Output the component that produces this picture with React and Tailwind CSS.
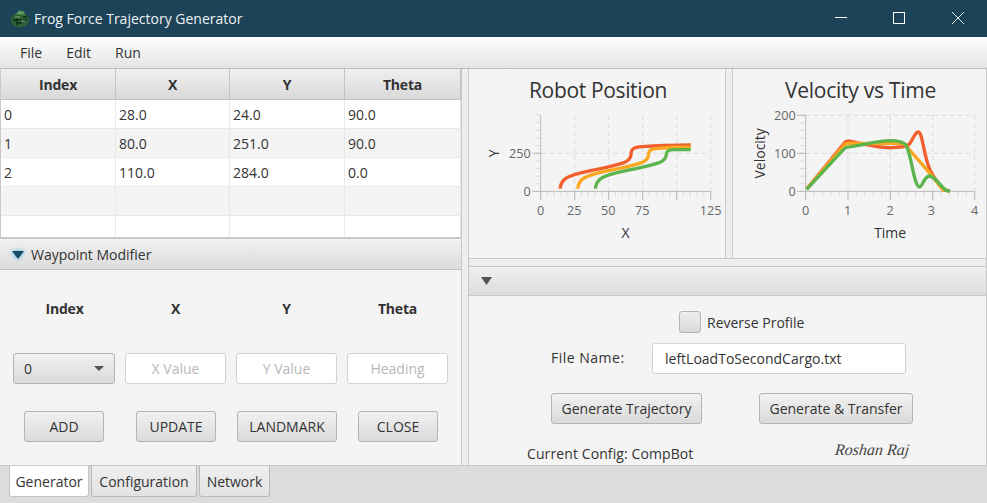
import React from "react";

const btn = "h-[31px] rounded-[3px] border border-[#b4b4b4] bg-gradient-to-b from-[#f1f1f1] to-[#dadada] text-[14px] text-[#333] flex items-center justify-center";
const field = "h-[31px] rounded-[3px] border border-[#d2d2d2] bg-white text-[14px] flex items-center";

const rows = [
  ["0", "28.0", "24.0", "90.0"],
  ["1", "80.0", "251.0", "90.0"],
  ["2", "110.0", "284.0", "0.0"],
  ["", "", "", ""],
  ["", "", "", ""],
];

function Axes({ x0, x1, y0, y1, xMajors, yMajors, xMinor, yMinor, xLabels, yLabels, xTitle, yTitle, yTitleX }) {
  const xm = [];
  for (let v = x0; v <= x1 + 0.1; v += xMinor) xm.push(v);
  const ym = [];
  for (let v = y0; v >= y1 - 0.1; v -= yMinor) ym.push(v);
  return (
    <g>
      {xMajors.slice(1).map((x) => (
        <line key={x} x1={x} x2={x} y1={y1} y2={y0} stroke="#dcdcdc" strokeWidth="3" strokeDasharray="15 9" />
      ))}
      {yMajors.slice(1).map((y) => (
        <line key={y} x1={x0} x2={x1} y1={y} y2={y} stroke="#dcdcdc" strokeWidth="3" strokeDasharray="15 9" />
      ))}
      {xm.map((x) => (
        <line key={x} x1={x} x2={x} y1={y0} y2={y0 + 17} stroke="#dcdcdc" strokeWidth="3" />
      ))}
      {ym.map((y) => (
        <line key={y} x1={x0 - 17} x2={x0} y1={y} y2={y} stroke="#dcdcdc" strokeWidth="3" />
      ))}
      {xMajors.map((x) => (
        <line key={x} x1={x} x2={x} y1={y0} y2={y0 + 26} stroke="#b9b9b9" strokeWidth="3" />
      ))}
      {yMajors.map((y) => (
        <line key={y} x1={x0 - 26} x2={x0} y1={y} y2={y} stroke="#b9b9b9" strokeWidth="3" />
      ))}
      <line x1={x0} x2={x1} y1={y0} y2={y0} stroke="#b9b9b9" strokeWidth="3" />
      <line x1={x0} x2={x0} y1={y1} y2={y0} stroke="#b9b9b9" strokeWidth="3" />
      <g fill="#666" fontSize="38" textAnchor="middle">
        {xLabels.map(([x, t]) => (
          <text key={t} x={x} y={449}>{t}</text>
        ))}
      </g>
      <g fill="#666" fontSize="38" textAnchor="end">
        {yLabels.map(([y, t]) => (
          <text key={t} x={x0 - 30} y={y + 13}>{t}</text>
        ))}
      </g>
      <text x={(x0 + x1) / 2} y={519} fill="#333" fontSize="42" textAnchor="middle">{xTitle}</text>
      <text transform={`translate(${yTitleX} 265) rotate(-90)`} fill="#333" fontSize="42" textAnchor="middle">{yTitle}</text>
    </g>
  );
}

function Curve({ d, c }) {
  return <path d={d} fill="none" stroke={c} strokeWidth="10" strokeLinejoin="round" />;
}

function FrogIcon() {
  return (
    <svg width="20" height="20" viewBox="0 0 20 20" className="shrink-0">
      <ellipse cx="10" cy="11" rx="9" ry="7.5" fill="#2f5f34" />
      <path d="M6 5 L9 1.5 L14 2.5 L15 6 Z" fill="#5d9a63" />
      <path d="M3 11 H17 M7 8 V16 M13 8 H17 M6 14 H12" stroke="#0f2c1a" strokeWidth="1.3" fill="none" />
      <path d="M5 8 H10 M11 12 H15" stroke="#7db383" strokeWidth="1" fill="none" />
    </svg>
  );
}

export default function App() {
  return (
    <div className="w-[987px] h-[503px] overflow-hidden flex flex-col bg-[#f4f4f4] text-[#333] font-['Open_Sans',sans-serif] text-[14px]">
      {/* title bar */}
      <div className="h-[37px] shrink-0 bg-[#1d4359] flex items-center pl-[10px] text-[#eef2f4]">
        <FrogIcon />
        <span className="ml-[4px] flex-1">Frog Force Trajectory Generator</span>
        <svg width="12" height="12" viewBox="0 0 12 12" className="mr-[46px] -mt-[1px]"><path d="M0 5.5H12" stroke="#fff" /></svg>
        <svg width="12" height="12" viewBox="0 0 12 12" className="mr-[47px] -mt-[1px]"><rect x="0.5" y="0.5" width="11" height="11" fill="none" stroke="#fff" /></svg>
        <svg width="12" height="12" viewBox="0 0 12 12" className="mr-[23px] -mt-[1px]"><path d="M0 0L12 12M12 0L0 12" stroke="#e8edf0" /></svg>
      </div>
      {/* menu */}
      <div className="h-[32px] shrink-0 bg-gradient-to-b from-[#fefefe] to-[#e4e4e4] border-b border-[#bdbdbd] flex items-center pl-[20px] gap-[24px] text-[#333]">
        <span>File</span>
        <span>Edit</span>
        <span>Run</span>
      </div>
      {/* workspace */}
      <div className="h-[396px] shrink-0 flex overflow-hidden">
        {/* left */}
        <div className="w-[461px] shrink-0 flex flex-col">
          <div className="h-[170px] shrink-0 border-b-2 border-l border-[#c8c8c8] overflow-hidden bg-white">
            <div className="grid grid-cols-[115px_114px_115px_116px] h-[31px] font-bold tracking-[-0.2px]">
              {["Index", "X", "Y", "Theta"].map((h) => (
                <div key={h} className="bg-gradient-to-b from-[#f0f0f0] to-[#d9d9d9] border-r border-b border-[#c4c4c4] flex items-center justify-center">{h}</div>
              ))}
            </div>
            {rows.map((r, i) => (
              <div key={i} className={`grid grid-cols-[115px_114px_115px_116px] h-[29px] ${i % 2 ? "bg-[#f4f4f4]" : "bg-white"}`}>
                {r.map((c, j) => (
                  <div key={j} className="border-r border-b border-[#e8e8e8] flex items-center pl-[3px]">{c}</div>
                ))}
              </div>
            ))}
          </div>
          <div className="h-[30px] shrink-0 mt-[1px] bg-gradient-to-b from-[#f0f0f0] to-[#dcdcdc] border-b border-[#c0c0c0] flex items-center pl-[11px] gap-[6px]">
            <svg width="14" height="10" viewBox="0 0 14 10" style={{ filter: "drop-shadow(0 0 2px #45b5f0)" }}><path d="M1 1H13L7 9Z" fill="#174a66" /></svg>
            <span>Waypoint Modifier</span>
          </div>
          <div className="flex-1 flex flex-col">
            <div className="flex pl-[14px] gap-[10px] pt-[28px] font-bold tracking-[-0.2px]">
              {["Index", "X", "Y", "Theta"].map((h) => (
                <div key={h} className="w-[101px] text-center">{h}</div>
              ))}
            </div>
            <div className="flex pl-[13px] gap-[10px] mt-[34px]">
              <div className={`${btn} w-[102px] justify-between! px-[10px]`}>
                <span>0</span>
                <svg width="10" height="5" viewBox="0 0 10 5"><path d="M0 0H10L5 5Z" fill="#555" /></svg>
              </div>
              {["X Value", "Y Value", "Heading"].map((p) => (
                <div key={p} className={`${field} w-[101px] justify-center text-[#b8b8b8]`}>{p}</div>
              ))}
            </div>
            <div className="flex pl-[24px] mt-[27px]">
              <div className={`${btn} w-[80px]`}>ADD</div>
              <div className={`${btn} w-[80px] ml-[32px]`}>UPDATE</div>
              <div className={`${btn} w-[100px] ml-[21px]`}>LANDMARK</div>
              <div className={`${btn} w-[80px] ml-[21px]`}>CLOSE</div>
            </div>
          </div>
        </div>
        {/* divider */}
        <div className="w-[8px] shrink-0 bg-[#eeeeee] border-l border-r border-[#c8c8c8]" />
        {/* right */}
        <div className="flex-1 flex flex-col min-w-0 border-r border-[#c8c8c8]">
          <div className="h-[190px] shrink-0 flex border-b border-[#c8c8c8]">
            <div className="w-[256px] shrink-0 flex flex-col">
              <div className="h-[36px] shrink-0 flex items-center justify-center text-[21px] leading-[28px] tracking-[-0.35px] pt-[5px] pl-[2px]">Robot Position</div>
              <svg className="block" width="255" height="153" viewBox="0 120 765 459">
                <Axes x0={215} x1={725} y0={379} y1={150} xMajors={[215, 317, 419, 521, 623, 725]} yMajors={[379, 265]} xMinor={20.4} yMinor={22.9}
                  xLabels={[[215, "0"], [316, "25"], [418, "50"], [520, "75"], [725, "125"]]} yLabels={[[379, "0"], [265, "250"]]} xTitle="X" yTitle="Y" yTitleX={91} />
                <Curve c="#f15f2c" d="M273 371 C276 345 292 334 330 325 C380 312 430 306 465 293 C482 286 486 278 486 268 C486 252 492 247 520 245 C570 241 620 240 665 240" />
                <Curve c="#faa61f" d="M326 371 C329 345 345 334 383 325 C433 312 483 306 518 293 C535 286 539 278 539 268 C539 255 545 252 570 250 C600 247 640 246 665 246" />
                <Curve c="#5cb44c" d="M379 371 C382 345 398 334 436 325 C486 312 536 306 571 293 C588 286 592 278 592 268 C592 258 598 255 615 254 L665 254" />
              </svg>
            </div>
            <div className="w-[8px] shrink-0 border-x border-[#c8c8c8] bg-[#eeeeee]" />
            <div className="flex-1 flex flex-col min-w-0">
              <div className="h-[36px] shrink-0 flex items-center justify-center text-[21px] leading-[28px] tracking-[-0.25px] pt-[5px] pl-[2px]">Velocity vs Time</div>
              <svg className="block" width="254" height="153" viewBox="9 120 762 459">
                <Axes x0={227} x1={734} y0={379} y1={151} xMajors={[227, 354, 481, 608, 734]} yMajors={[379, 265, 151]} xMinor={25.35} yMinor={22.8}
                  xLabels={[[227, "0"], [353, "1"], [480, "2"], [604, "3"], [734, "4"]]} yLabels={[[379, "0"], [265, "100"], [151, "200"]]} xTitle="Time" yTitle="Velocity" yTitleX={105} />
                <Curve c="#f15f2c" d="M230 372 L345 232 Q352 226 362 229 C400 238 450 250 485 248 C510 247 525 246 535 240 C548 230 552 202 565 201 C578 202 580 270 600 315 C615 345 635 368 645 375 L660 378" />
                <Curve c="#faa61f" d="M230 372 L345 238 Q350 234 360 235 C400 236 450 235 490 235 C510 235 522 233 530 245 L600 325 L642 379" />
                <Curve c="#5cb44c" d="M230 373 L343 251 Q350 246 362 245 C400 240 440 228 480 227 C505 227 520 230 527 240 C545 265 550 360 568 366 C578 366 582 334 598 333 C615 334 630 362 648 376 L660 378" />
              </svg>
            </div>
          </div>
          <div className="h-[7px] shrink-0 bg-[#eeeeee]" />
          <div className="h-[30px] shrink-0 bg-gradient-to-b from-[#f0f0f0] to-[#dcdcdc] border-y border-[#c8c8c8] flex items-center pl-[12px]">
            <svg width="11" height="8" viewBox="0 0 11 8"><path d="M0 0H11L5.5 8Z" fill="#555" /></svg>
          </div>
          <div className="flex-1 flex flex-col overflow-hidden">
            <div className="flex items-center h-[22px] mt-[15px] pl-[210px]">
              <div className="w-[22px] h-[22px] rounded-[3px] border border-[#b4b4b4] bg-gradient-to-b from-[#eeeeee] to-[#dadada]" />
              <span className="ml-[6px]">Reverse Profile</span>
            </div>
            <div className="flex items-center mt-[10px] pl-[82px]">
              <span className="w-[101px] -mt-[3px] tracking-[0.5px]">File Name:</span>
              <div className={`${field} w-[254px] pl-[12px]`}>leftLoadToSecondCargo.txt</div>
            </div>
            <div className="flex mt-[19px] pl-[82px]">
              <div className={`${btn} w-[151px]`}>Generate Trajectory</div>
              <div className={`${btn} w-[154px] ml-[57px]`}>Generate &amp; Transfer</div>
            </div>
            <div className="flex mt-[16px] pl-[58px] h-[24px] items-start">
              <span className="w-[308px] mt-[3px] tracking-[0.1px]">Current Config: CompBot</span>
              <span className="font-['Liberation_Serif',serif] italic text-[16px] leading-[20px] text-[#444] -skew-x-6">Roshan Raj</span>
            </div>
          </div>
        </div>
      </div>
      {/* tabs */}
      <div className="flex-1 bg-[#dcdcdc] border-t border-[#c8c8c8] flex items-start pl-[9px] gap-[2px]">
        <div className="h-[31px] w-[80px] rounded-b-[3px] border border-t-0 border-[#c4c4c4] bg-white flex items-center justify-center">Generator</div>
        <div className="h-[31px] w-[106px] rounded-b-[3px] border border-t-0 border-[#b9b9b9] bg-gradient-to-b from-[#efefef] to-[#e2e2e2] flex items-center justify-center">Configuration</div>
        <div className="h-[31px] w-[71px] rounded-b-[3px] border border-t-0 border-[#b9b9b9] bg-gradient-to-b from-[#efefef] to-[#e2e2e2] flex items-center justify-center">Network</div>
      </div>
    </div>
  );
}
